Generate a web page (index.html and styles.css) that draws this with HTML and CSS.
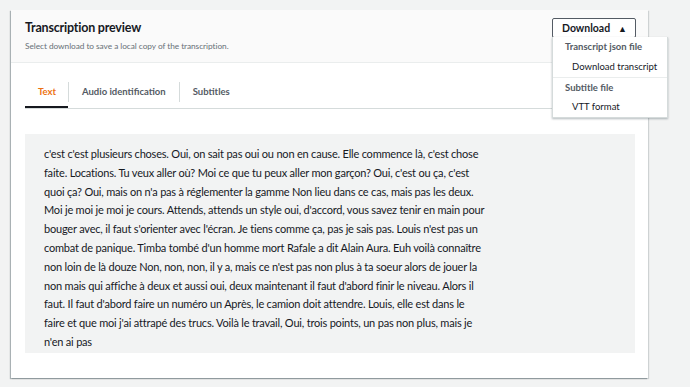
FILE: index.html
```html
<!DOCTYPE html>
<html>
<head>
<meta charset="utf-8">
<link rel="stylesheet" href="styles.css">
</head>
<body>
<div class="page">
  <section class="card">
    <header class="card-header">
      <div class="titles">
        <h2 class="title">Transcription preview</h2>
        <p class="subtitle">Select download to save a local copy of the transcription.</p>
      </div>
      <div class="dropdown">
        <button class="dl-btn">Download <span class="caret">&#9650;</span></button>
        <ul class="menu">
          <li class="group">Transcript json file</li>
          <li class="item">Download transcript</li>
          <li class="group sep">Subtitle file</li>
          <li class="item">VTT format</li>
        </ul>
      </div>
    </header>
    <div class="card-body">
      <nav class="tabs">
        <span class="tab active">Text</span>
        <span class="tab">Audio identification</span>
        <span class="tab">Subtitles</span>
      </nav>
      <div class="panel">
        <p class="transcript">c'est c'est plusieurs choses. Oui, on sait pas oui ou non en cause. Elle commence là, c'est chose faite. Locations. Tu veux aller où? Moi ce que tu peux aller mon garçon? Oui, c'est ou ça, c'est quoi ça? Oui, mais on n'a pas à réglementer la gamme Non lieu dans ce cas, mais pas les deux. Moi je moi je moi je cours. Attends, attends un style oui, d'accord, vous savez tenir en main pour bouger avec, il faut s'orienter avec l'écran. Je tiens comme ça, pas je sais pas. Louis n'est pas un combat de panique. Timba tombé d'un homme mort Rafale a dit Alain Aura. Euh voilà connaître non loin de là douze Non, non, non, il y a, mais ce n'est pas non plus à ta soeur alors de jouer la non mais qui affiche à deux et aussi oui, deux maintenant il faut d'abord finir le niveau. Alors il faut. Il faut d'abord faire un numéro un Après, le camion doit attendre. Louis, elle est dans le<br>faire et que moi j'ai attrapé des trucs. Voilà le travail, Oui, trois points, un pas non plus, mais je n'en ai pas</p>
      </div>
    </div>
  </section>
</div>
</body>
</html>
```

FILE: styles.css
```css
* { box-sizing: border-box; }
html, body {
  margin: 0;
  padding: 0;
  background: #f2f3f3;
  font-family: Lato, "Open Sans", sans-serif;
  color: #16191f;
}
.page {
  padding: 10px 42px 9px 11px;
}
.card {
  background: #ffffff;
  box-shadow: -1px 1px 1px rgba(0,28,36,0.3), 1px 1px 1px rgba(0,28,36,0.15);
  height: 368px;
}
.card-header {
  background: #fafafa;
  border-bottom: 1px solid #eaeded;
  height: 53px;
  display: flex;
  justify-content: space-between;
  padding: 8px 12px 0 14px;
}
.title {
  margin: 0;
  font-size: 12.5px;
  letter-spacing: -0.2px;
  font-weight: 700;
  line-height: 20px;
}
.subtitle {
  margin: 2px 0 0;
  font-size: 8.3px;
  letter-spacing: -0.05px;
  color: #687078;
  line-height: 12px;
}
.dropdown {
  position: relative;
}
.dl-btn {
  width: 84px;
  height: 20px;
  border: 1px solid #545b64;
  border-radius: 2px;
  background: #ffffff;
  font-family: Lato, "Open Sans", sans-serif;
  font-size: 10.5px;
  font-weight: 700;
  color: #16191f;
  padding: 0 0 0 1px;
  display: flex;
  align-items: center;
  justify-content: center;
  gap: 8px;
}
.caret {
  font-size: 9px;
  line-height: 1;
}
.menu {
  position: absolute;
  top: 19px;
  left: 0;
  width: 116px;
  margin: 0;
  padding: 0;
  list-style: none;
  background: #ffffff;
  border: 1px solid #d5dbdb;
  border-top: none;
  box-shadow: 0 1px 2px rgba(0,28,36,0.3);
  font-size: 9.5px;
  z-index: 2;
}
.menu li {
  height: 20px;
  line-height: 20px;
  white-space: nowrap;
}
.menu .group {
  font-weight: 700;
  color: #545b64;
  padding-left: 12px;
}
.menu .group.sep {
  border-top: 1px solid #eaeded;
  line-height: 19px;
}
.menu .item {
  padding-left: 19px;
  color: #16191f;
}
.card-body {
  padding: 0 13px 0 14px;
}
.tabs {
  display: flex;
  border-bottom: 1px solid #d5dbdb;
  height: 46px;
  padding-top: 19px;
  margin-right: -13px;
}
.tab {
  font-size: 9.5px;
  font-weight: 700;
  color: #545b64;
  line-height: 20px;
  padding: 0 13px;
  border-left: 1px solid #d5dbdb;
  height: 20px;
}
.tab.active {
  color: #ec7211;
  border-left: none;
  height: 26px;
  border-bottom: 2px solid #16191f;
  width: 43px;
}
.panel {
  margin-top: 25px;
  background: #f2f3f3;
  height: 219px;
  padding: 11px 19px;
}
.transcript {
  margin: 0;
  width: 446px;
  font-size: 11px;
  letter-spacing: -0.2px;
  line-height: 18.8px;
  color: #16191f;
}
```
